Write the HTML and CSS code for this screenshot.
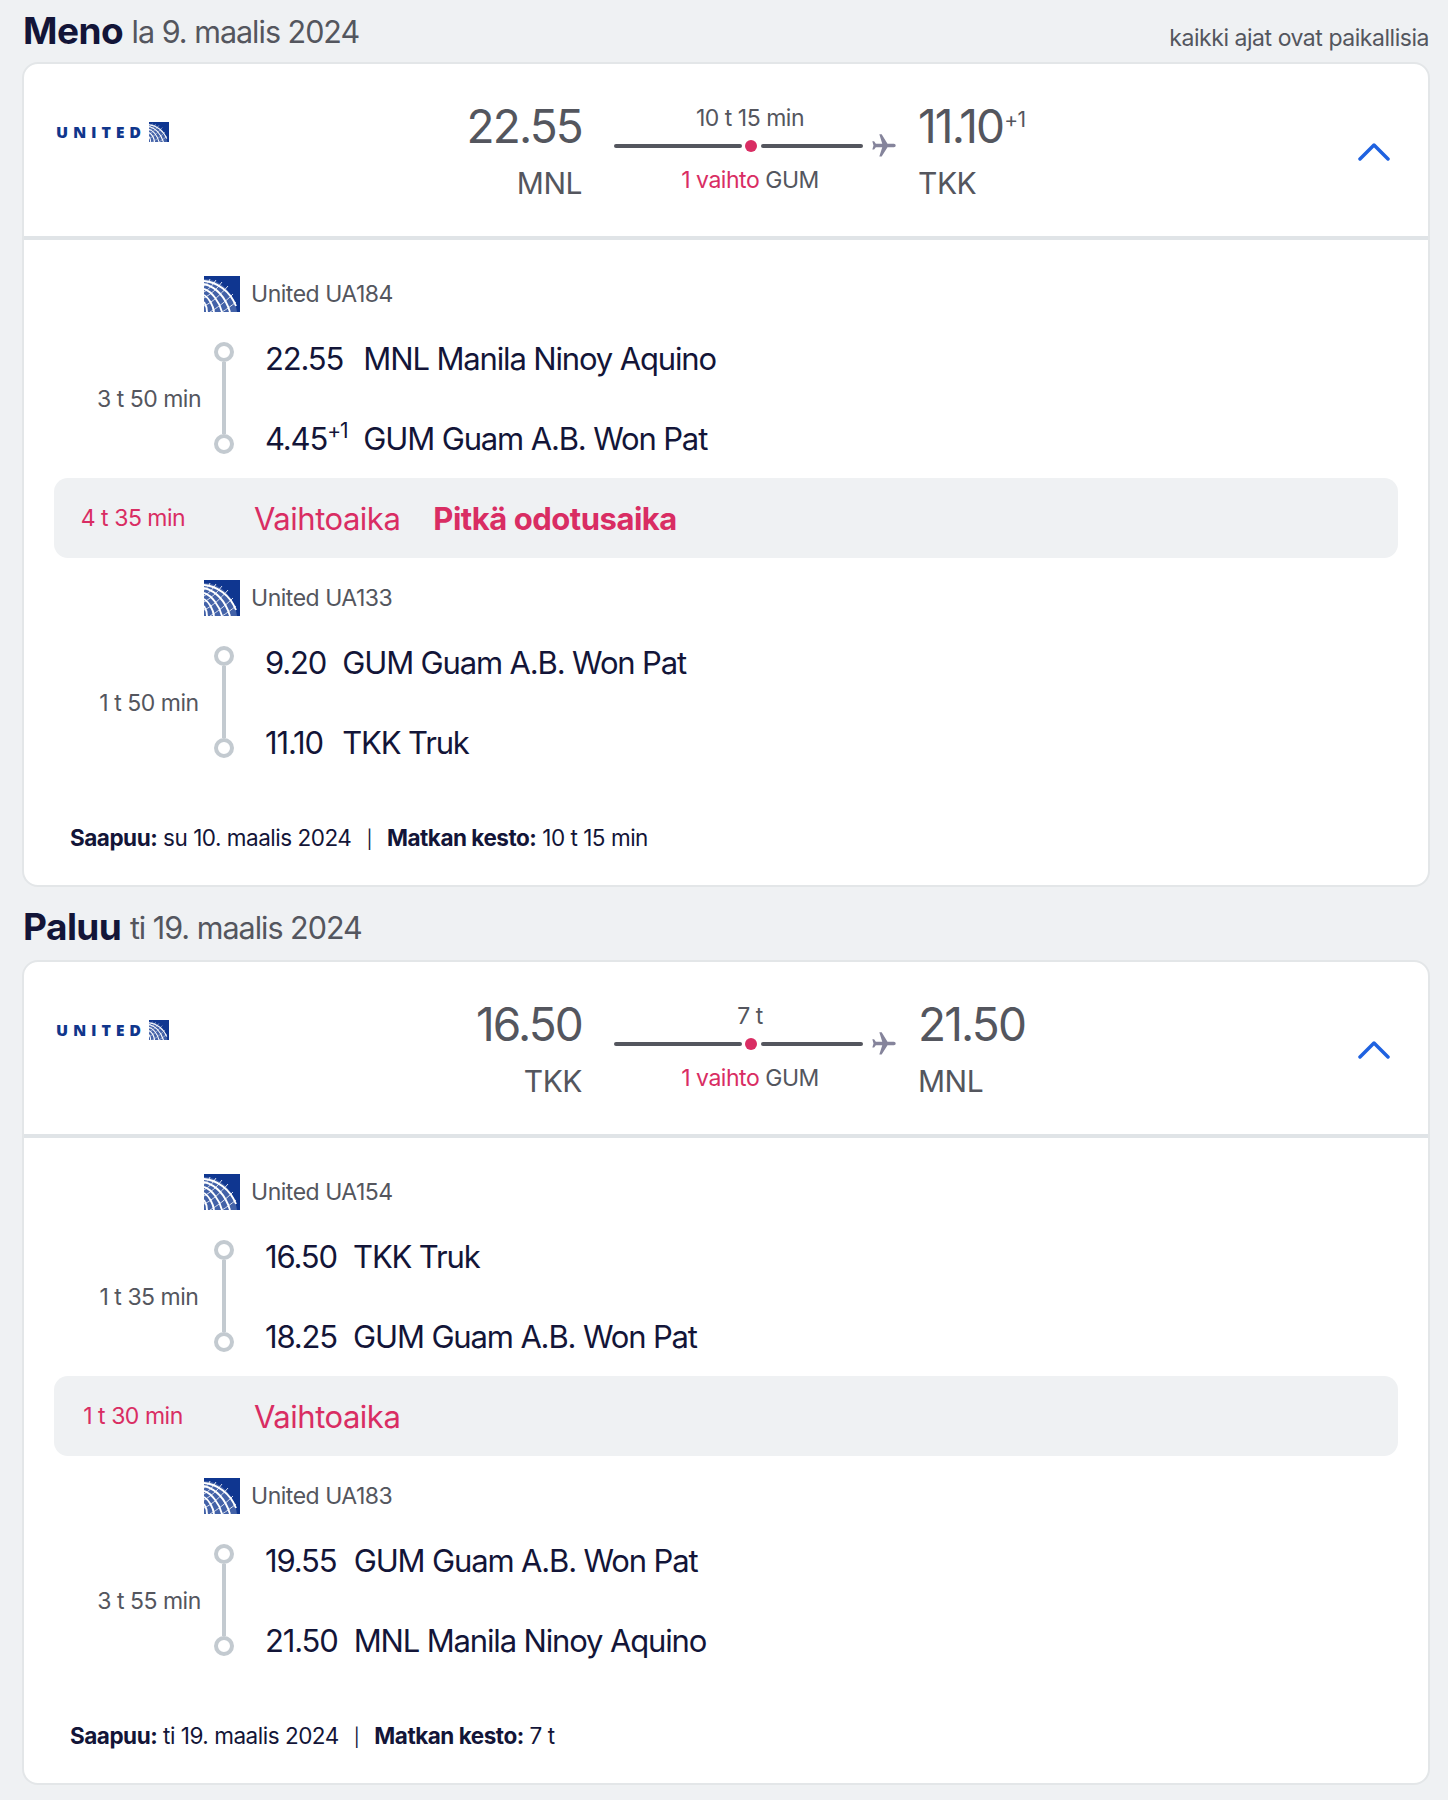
FILE: index.html
```html
<!DOCTYPE html>
<html lang="fi">
<head>
<meta charset="utf-8">
<title>Lennon tiedot</title>
<link rel="stylesheet" href="styles.css">
</head>
<body>
<svg class="defs" width="0" height="0" aria-hidden="true">
  <symbol id="globe" viewBox="0 0 36 36">
    <rect width="36" height="36" fill="#0f3690"/>
    <path d="M0 3C14 3 30 14 33 36H0z" fill="#fff" opacity=".22"/>
    <g fill="none" stroke="#fff">
      <g stroke-width="1.9">
        <path d="M0 5C13 6 26 15 32 30"/>
        <path d="M0 8C11 11 21 20 26 36"/>
        <path d="M0 13C8 16 15 25 18 36"/>
        <path d="M0 19C5 22 9 29 10 36"/>
        <path d="M0 26C2 29 3 32 3 36"/>
      </g>
      <g stroke-width=".9" opacity=".9">
        <path d="M6 3C5 6 3 8 0 10"/>
        <path d="M12 4C9 9 5 13 0 16"/>
        <path d="M18 6C13 13 7 18 0 22"/>
        <path d="M24 10C17 18 9 26 0 30"/>
        <path d="M29 18C21 26 13 32 6 36"/>
        <path d="M32 26C27 30 23 33 18 36"/>
      </g>
    </g>
  </symbol>
  <symbol id="plane" viewBox="0 0 24 24">
    <path transform="rotate(90 12 12)" d="M21 16v-2l-8-5V3.5c0-.83-.67-1.5-1.5-1.5S10 2.67 10 3.5V9l-8 5v2l8-2.5V19l-2 1.5V22l3.5-1 3.5 1v-1.5L13 19v-5.5l8 2.5z"/>
  </symbol>
</svg>

<header class="section-head">
  <h2 class="section-title"><strong>Meno</strong> <span>la 9. maalis 2024</span></h2>
  <p class="local-note">kaikki ajat ovat paikallisia</p>
</header>
<section class="card">
  <div class="summary">
    <div class="brand"><span class="brand-name">UNITED</span><svg class="brand-mark"><use href="#globe"/></svg></div>
    <div class="end end-dep"><div class="end-time">22.55</div><div class="end-code">MNL</div></div>
    <div class="route">
      <div class="route-duration">10 t 15 min</div>
      <div class="route-line"><span class="line-seg line-seg-a"></span><span class="stop-dot"></span><span class="line-seg line-seg-b"></span><svg class="route-plane"><use href="#plane"/></svg></div>
      <div class="route-stops"><span class="pink">1 vaihto</span> GUM</div>
    </div>
    <div class="end end-arr"><div class="end-time">11.10<sup class="end-plus">+1</sup></div><div class="end-code">TKK</div></div>
    <svg class="chevron" viewBox="0 0 34 20"><path d="M3 18 17 4l14 14"/></svg>
  </div>
  <div class="details">
    <div class="leg">
      <div class="carrier"><svg class="carrier-logo"><use href="#globe"/></svg><span>United UA184</span></div>
      <div class="stops">
        <div class="leg-duration">3 t 50 min</div>
        <div class="timeline"><span class="node"></span><span class="rail"></span><span class="node"></span></div>
        <div class="rows">
          <span class="row-time">22.55</span><span class="row-place">MNL Manila Ninoy Aquino</span>
          <span class="row-time">4.45<sup class="row-plus">+1</sup></span><span class="row-place">GUM Guam A.B. Won Pat</span>
        </div>
      </div>
    </div>
    <div class="layover"><span class="layover-time">4 t 35 min</span><span class="layover-label">Vaihtoaika</span><strong class="layover-warn">Pitkä odotusaika</strong></div>
    <div class="leg">
      <div class="carrier"><svg class="carrier-logo"><use href="#globe"/></svg><span>United UA133</span></div>
      <div class="stops">
        <div class="leg-duration">1 t 50 min</div>
        <div class="timeline"><span class="node"></span><span class="rail"></span><span class="node"></span></div>
        <div class="rows">
          <span class="row-time">9.20</span><span class="row-place">GUM Guam A.B. Won Pat</span>
          <span class="row-time">11.10</span><span class="row-place">TKK Truk</span>
        </div>
      </div>
    </div>
    <p class="trip-foot"><strong>Saapuu:</strong> su 10. maalis 2024<span class="sep">|</span><strong>Matkan kesto:</strong> 10 t 15 min</p>
  </div>
</section>

<header class="section-head section-head-next">
  <h2 class="section-title"><strong>Paluu</strong> <span>ti 19. maalis 2024</span></h2>
</header>
<section class="card">
  <div class="summary">
    <div class="brand"><span class="brand-name">UNITED</span><svg class="brand-mark"><use href="#globe"/></svg></div>
    <div class="end end-dep"><div class="end-time">16.50</div><div class="end-code">TKK</div></div>
    <div class="route">
      <div class="route-duration">7 t</div>
      <div class="route-line"><span class="line-seg line-seg-a"></span><span class="stop-dot"></span><span class="line-seg line-seg-b"></span><svg class="route-plane"><use href="#plane"/></svg></div>
      <div class="route-stops"><span class="pink">1 vaihto</span> GUM</div>
    </div>
    <div class="end end-arr"><div class="end-time">21.50</div><div class="end-code">MNL</div></div>
    <svg class="chevron" viewBox="0 0 34 20"><path d="M3 18 17 4l14 14"/></svg>
  </div>
  <div class="details">
    <div class="leg">
      <div class="carrier"><svg class="carrier-logo"><use href="#globe"/></svg><span>United UA154</span></div>
      <div class="stops">
        <div class="leg-duration">1 t 35 min</div>
        <div class="timeline"><span class="node"></span><span class="rail"></span><span class="node"></span></div>
        <div class="rows">
          <span class="row-time">16.50</span><span class="row-place">TKK Truk</span>
          <span class="row-time">18.25</span><span class="row-place">GUM Guam A.B. Won Pat</span>
        </div>
      </div>
    </div>
    <div class="layover"><span class="layover-time">1 t 30 min</span><span class="layover-label">Vaihtoaika</span></div>
    <div class="leg">
      <div class="carrier"><svg class="carrier-logo"><use href="#globe"/></svg><span>United UA183</span></div>
      <div class="stops">
        <div class="leg-duration">3 t 55 min</div>
        <div class="timeline"><span class="node"></span><span class="rail"></span><span class="node"></span></div>
        <div class="rows">
          <span class="row-time">19.55</span><span class="row-place">GUM Guam A.B. Won Pat</span>
          <span class="row-time">21.50</span><span class="row-place">MNL Manila Ninoy Aquino</span>
        </div>
      </div>
    </div>
    <p class="trip-foot"><strong>Saapuu:</strong> ti 19. maalis 2024<span class="sep">|</span><strong>Matkan kesto:</strong> 7 t</p>
  </div>
</section>
</body>
</html>
```
FILE: styles.css
```css
* { box-sizing: border-box; }
html, body { margin: 0; }
body {
  padding: 0 18px 0 22px;
  background: #eff1f3;
  color: #131538;
  font-family: Inter, "Liberation Sans", sans-serif;
  letter-spacing: -0.03em;
}
.defs { display: block; height: 0; }

.section-head {
  display: flex;
  justify-content: space-between;
  height: 62px;
  padding: 0 1px;
}
.section-head-next { height: 73px; padding-top: 9px; }
.section-title { margin: 0; font-size: 30.5px; line-height: 62px; font-weight: 400; letter-spacing: -0.033em; }
.section-title strong { font-size: 37px; font-weight: 700; letter-spacing: -0.015em; }
.section-title span { margin-left: 1px; vertical-align: 1px; color: #54565e; }
.local-note { margin: 0; font-size: 23px; line-height: 76px; letter-spacing: -0.02em; color: #54565e; }

.card {
  background: #fff;
  border: 2px solid #e3e6e8;
  border-radius: 16px;
}
.summary {
  display: flex;
  align-items: flex-start;
  height: 176px;
  padding: 0 37px 0 32px;
  border-bottom: 4px solid #e0e4e7;
  color: #54565e;
}
.brand {
  display: flex;
  align-items: center;
  gap: 3px;
  width: 376px;
  padding-top: 58px;
}
.brand-name { font-family: "Open Sans", sans-serif; font-size: 16px; line-height: 20px; font-weight: 800; letter-spacing: 0.3em; color: #10368c; }
.brand-mark { width: 20px; height: 20px; }
.end { width: 150px; padding-top: 34px; }
.end-dep { text-align: right; }
.end-time { font-size: 46px; line-height: 56px; letter-spacing: -0.04em; }
.end-code { margin-top: 9px; font-size: 30px; line-height: 40px; }
.end-plus { margin-left: 1px; font-size: 21px; line-height: 0; letter-spacing: -0.03em; vertical-align: 16px; }
.route { width: 284px; margin: 0 20px 0 32px; padding-top: 39px; }
.route-duration, .route-stops { width: 272px; text-align: center; font-size: 23px; line-height: 30px; }
.route-line { display: flex; align-items: center; height: 24px; margin-top: 1px; }
.line-seg { flex: none; height: 4px; border-radius: 2px; background: #54565e; }
.line-seg-a { width: 128px; }
.line-seg-b { width: 102px; }
.stop-dot { flex: none; width: 12px; height: 12px; margin: 0 4px 0 3px; border-radius: 50%; background: #d92d63; }
.route-plane { flex: none; width: 28px; height: 28px; margin-left: 7px; fill: #85849b; }
.route-stops { margin-top: 7px; }
.pink { color: #d92d63; letter-spacing: -0.02em; }
.chevron { width: 34px; height: 20px; margin: 77px 0 0 auto; fill: none; stroke: #1f62e0; stroke-width: 3.5; stroke-linecap: round; stroke-linejoin: round; }

.details { padding: 35px 0 32px; }
.layover + .leg { margin-top: 21px; }
.carrier {
  display: flex;
  align-items: center;
  gap: 11px;
  height: 44px;
  padding-left: 180px;
  font-size: 23px;
  color: #54565e;
}
.carrier-logo { width: 36px; height: 38px; margin-bottom: 6px; }
.carrier span { margin-bottom: 6px; }
.stops { display: flex; align-items: center; height: 159px; padding-left: 65px; }
.leg-duration { width: 120px; text-align: center; font-size: 23px; color: #54565e; }
.timeline {
  display: flex;
  flex-direction: column;
  align-items: center;
  width: 30px;
  height: 112px;
  margin: -2px 26px 0 0;
}
.node { flex: none; width: 20px; height: 20px; border: 4px solid #c3cad0; border-radius: 50%; }
.rail { flex: 1; width: 4px; background: #c3cad0; }
.rows {
  display: grid;
  grid-template-columns: auto auto;
  grid-auto-rows: 79.5px;
  column-gap: 16px;
  align-items: center;
  font-size: 31px;
  letter-spacing: -0.037em;
}
.row-plus { font-size: 21px; line-height: 0; vertical-align: 12px; }

.layover {
  display: flex;
  align-items: center;
  height: 80px;
  margin: 0 30px;
  border-radius: 14px;
  background: #eff1f3;
  color: #d92d63;
}
.layover-time { width: 158px; text-align: center; font-size: 23px; }
.layover-label { margin-left: 42px; font-size: 31px; }
.layover-warn { margin-left: 33px; font-size: 31px; }

.trip-foot { margin: 41px 0 0 46px; font-size: 22.5px; line-height: 30px; }
.sep { margin: 0 15px; font-size: 18px; line-height: 1; }
```
